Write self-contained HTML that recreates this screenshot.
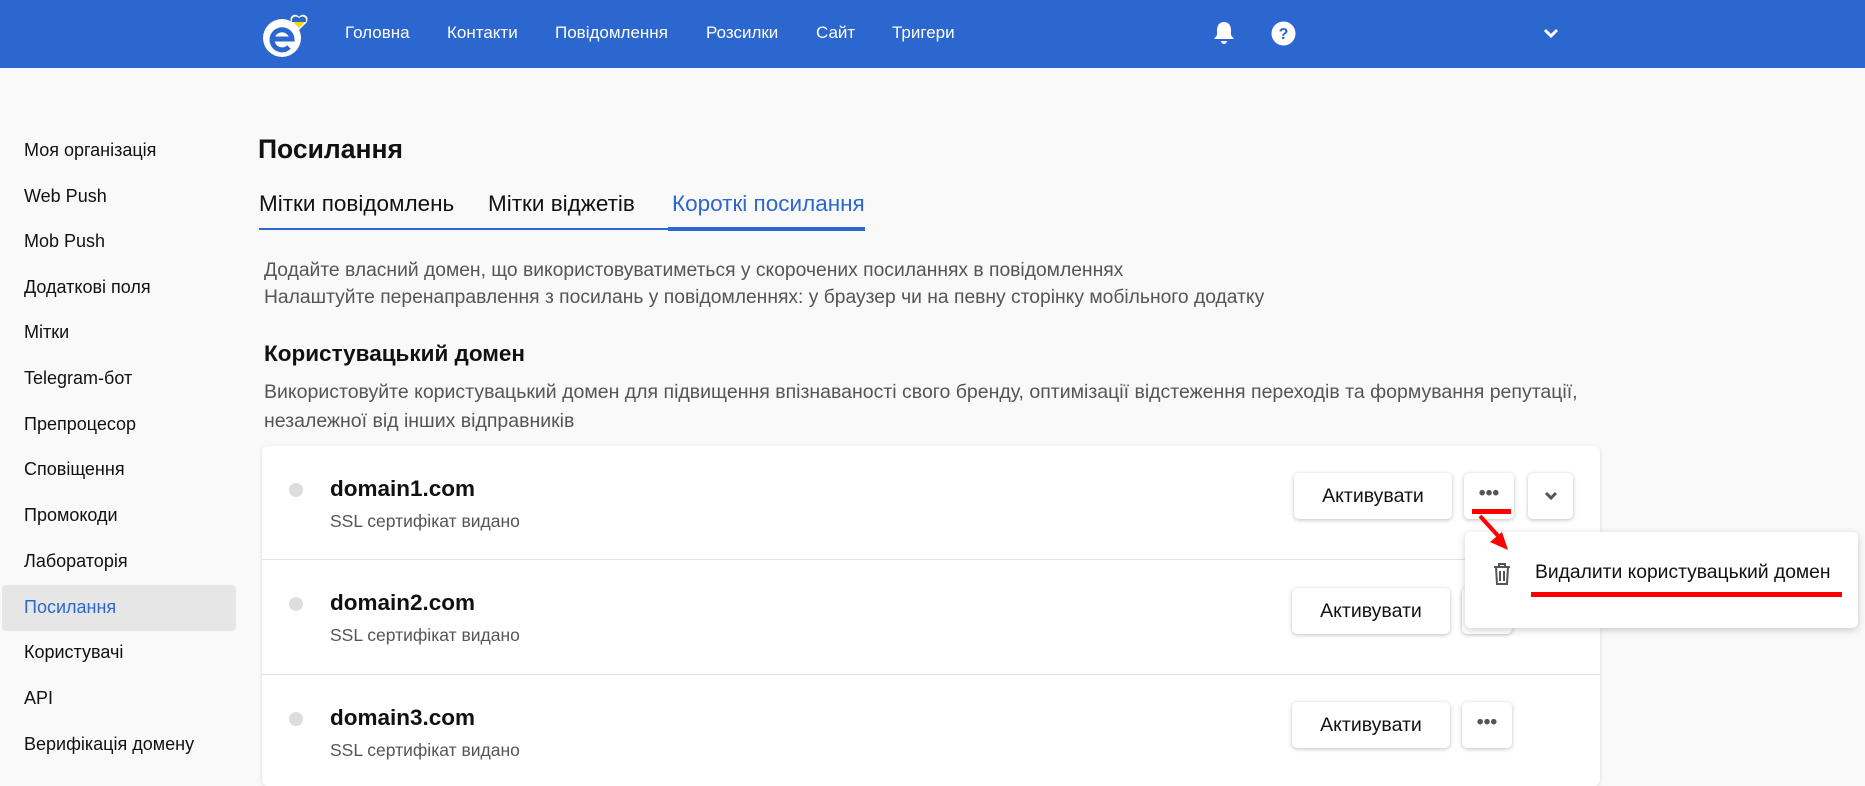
<!DOCTYPE html>
<html><head><meta charset="utf-8"><style>
*{box-sizing:border-box;margin:0;padding:0}
body{width:1865px;height:770px;overflow:hidden;background:#f9f9f9;font-family:"Liberation Sans",sans-serif;position:relative;color:#111}
.hdr{position:absolute;left:0;top:0;width:1865px;height:68px;background:#2c66cf}
.nav{position:absolute;top:23px;color:#fff;font-size:17px}
.a{position:absolute;white-space:nowrap}
.side{font-size:18px;color:#111}
.card{position:absolute;left:262px;top:446px;width:1338px;height:340px;background:#fff;border-radius:6px;box-shadow:0 1px 4px rgba(0,0,0,.12)}
.btn{position:absolute;background:#fff;border-radius:5px;box-shadow:0 1px 4px rgba(0,0,0,.25);font-size:19.5px;text-align:center;color:#111}
.dot{position:absolute;width:14px;height:14px;border-radius:50%;background:#ddd}
.dm{font-size:22.5px;font-weight:bold}
.ssl{font-size:17.5px;color:#555}
</style></head><body>
<div class="hdr">
<svg class="a" style="left:260px;top:12px" width="66" height="48" viewBox="0 0 66 48">
<circle cx="22" cy="26" r="19" fill="#fff"/>
<path d="M12 27 h20 a10 10 0 1 0 -3 8" stroke="#2c66cf" stroke-width="5" fill="none"/>
<path d="M39 6 c-3-5-10-2-7 4 l7 7 l7-7 c3-6-4-9-7-4z" fill="#f5d90a" stroke="#fff" stroke-width="1.5"/>
<path d="M32 10 c-1-5 4-7 7-4 c3-3 8-1 7 4z" fill="#2c66cf"/>
</svg>
<div class="nav a" style="left:345px">Головна</div>
<div class="nav a" style="left:447px">Контакти</div>
<div class="nav a" style="left:555px">Повідомлення</div>
<div class="nav a" style="left:706px">Розсилки</div>
<div class="nav a" style="left:816px">Сайт</div>
<div class="nav a" style="left:892px">Тригери</div>
<svg class="a" style="left:1212px;top:20px" width="24" height="26" viewBox="0 0 24 26"><path d="M12 2c-5 0-7 4-7 8v5l-3 4h20l-3-4v-5c0-4-2-8-7-8z M9 21a3 3 0 0 0 6 0z" fill="#fff"/></svg>
<svg class="a" style="left:1271px;top:21px" width="25" height="25" viewBox="0 0 25 25"><circle cx="12.5" cy="12.5" r="12" fill="#fff"/><text x="12.5" y="18" font-size="16" font-weight="bold" text-anchor="middle" fill="#2c66cf" font-family="Liberation Sans">?</text></svg>
<svg class="a" style="left:1543px;top:28px" width="16" height="12" viewBox="0 0 16 12"><path d="M2 2l6 6 6-6" stroke="#fff" stroke-width="3" fill="none"/></svg>
</div>
<div class="a" style="left:2px;top:585px;width:234px;height:46px;background:#e6e6e6;border-radius:4px"></div>
<div class="a side" style="left:24px;top:140px">Моя організація</div>
<div class="a side" style="left:24px;top:186px">Web Push</div>
<div class="a side" style="left:24px;top:231px">Mob Push</div>
<div class="a side" style="left:24px;top:277px">Додаткові поля</div>
<div class="a side" style="left:24px;top:322px">Мітки</div>
<div class="a side" style="left:24px;top:368px">Telegram-бот</div>
<div class="a side" style="left:24px;top:414px">Препроцесор</div>
<div class="a side" style="left:24px;top:459px">Сповіщення</div>
<div class="a side" style="left:24px;top:505px">Промокоди</div>
<div class="a side" style="left:24px;top:551px">Лабораторія</div>
<div class="a side" style="left:24px;top:597px;color:#2c66cf">Посилання</div>
<div class="a side" style="left:24px;top:642px">Користувачі</div>
<div class="a side" style="left:24px;top:688px">API</div>
<div class="a side" style="left:24px;top:734px">Верифікація домену</div>
<div class="a" style="left:258px;top:134px;font-size:26.5px;font-weight:bold">Посилання</div>
<div class="a" style="left:259px;top:191px;font-size:22.5px">Мітки повідомлень</div>
<div class="a" style="left:488px;top:191px;font-size:22.5px">Мітки віджетів</div>
<div class="a" style="left:672px;top:191px;font-size:22.5px;color:#2c66cf">Короткі посилання</div>
<div class="a" style="left:259px;top:228px;width:606px;height:2px;background:#2c66cf"></div>
<div class="a" style="left:668px;top:227px;width:197px;height:4px;background:#2c66cf"></div>
<div class="a" style="left:264px;top:257px;font-size:19.3px;color:#555;line-height:27px">Додайте власний домен, що використовуватиметься у скорочених посиланнях в повідомленнях<br>Налаштуйте перенаправлення з посилань у повідомленнях: у браузер чи на певну сторінку мобільного додатку</div>
<div class="a" style="left:264px;top:341px;font-size:22.5px;font-weight:bold">Користувацький домен</div>
<div class="a" style="left:264px;top:378px;font-size:19.5px;color:#555;line-height:29px">Використовуйте користувацький домен для підвищення впізнаваності свого бренду, оптимізації відстеження переходів та формування репутації,<br>незалежної від інших відправників</div>
<div class="card">
<div class="a" style="left:0;top:113px;width:1338px;height:1px;background:#e2e2e2"></div>
<div class="a" style="left:0;top:228px;width:1338px;height:1px;background:#e2e2e2"></div>
</div>
<div class="dot" style="left:289px;top:483px"></div>
<div class="dot" style="left:289px;top:597px"></div>
<div class="dot" style="left:289px;top:712px"></div>
<div class="a dm" style="left:330px;top:476px">domain1.com</div>
<div class="a ssl" style="left:330px;top:511px">SSL сертифікат видано</div>
<div class="a dm" style="left:330px;top:590px">domain2.com</div>
<div class="a ssl" style="left:330px;top:625px">SSL сертифікат видано</div>
<div class="a dm" style="left:330px;top:705px">domain3.com</div>
<div class="a ssl" style="left:330px;top:740px">SSL сертифікат видано</div>
<div class="btn" style="left:1294px;top:473px;width:158px;height:46px;line-height:46px">Активувати</div>
<div class="btn" style="left:1464px;top:473px;width:50px;height:46px;line-height:40px;font-weight:bold;color:#555">•••</div>
<div class="btn" style="left:1528px;top:473px;width:45px;height:46px"><svg style="margin-top:18px" width="14" height="10" viewBox="0 0 14 10"><path d="M2 2l5 5 5-5" stroke="#555" stroke-width="3" fill="none"/></svg></div>
<div class="btn" style="left:1292px;top:588px;width:158px;height:46px;line-height:46px">Активувати</div>
<div class="btn" style="left:1462px;top:588px;width:50px;height:46px"></div>
<div class="btn" style="left:1292px;top:702px;width:158px;height:46px;line-height:46px">Активувати</div>
<div class="btn" style="left:1462px;top:702px;width:50px;height:46px;line-height:40px;font-weight:bold;color:#555">•••</div>
<div class="a" style="left:1465px;top:532px;width:393px;height:96px;background:#fff;border-radius:6px;box-shadow:0 2px 8px rgba(0,0,0,.2)"></div>
<svg class="a" style="left:1492px;top:562px" width="20" height="24" viewBox="0 0 20 24"><path d="M2 5h16M7 5V2h6v3M4 5l1 17h10l1-17M8 9v10M12 9v10" stroke="#555" stroke-width="2" fill="none"/></svg>
<div class="a" style="left:1535px;top:562px;font-size:19.3px">Видалити користувацький домен</div>
<div class="a" style="left:1472px;top:509px;width:39px;height:5px;background:#f00"></div>
<div class="a" style="left:1531px;top:592px;width:311px;height:5px;background:#f00"></div>
<svg class="a" style="left:1476px;top:514px" width="40" height="40" viewBox="0 0 40 40"><path d="M4 2l20 22" stroke="#f00" stroke-width="4"/><path d="M14 28l18 8-6-18z" fill="#f00"/></svg>
</body></html>
